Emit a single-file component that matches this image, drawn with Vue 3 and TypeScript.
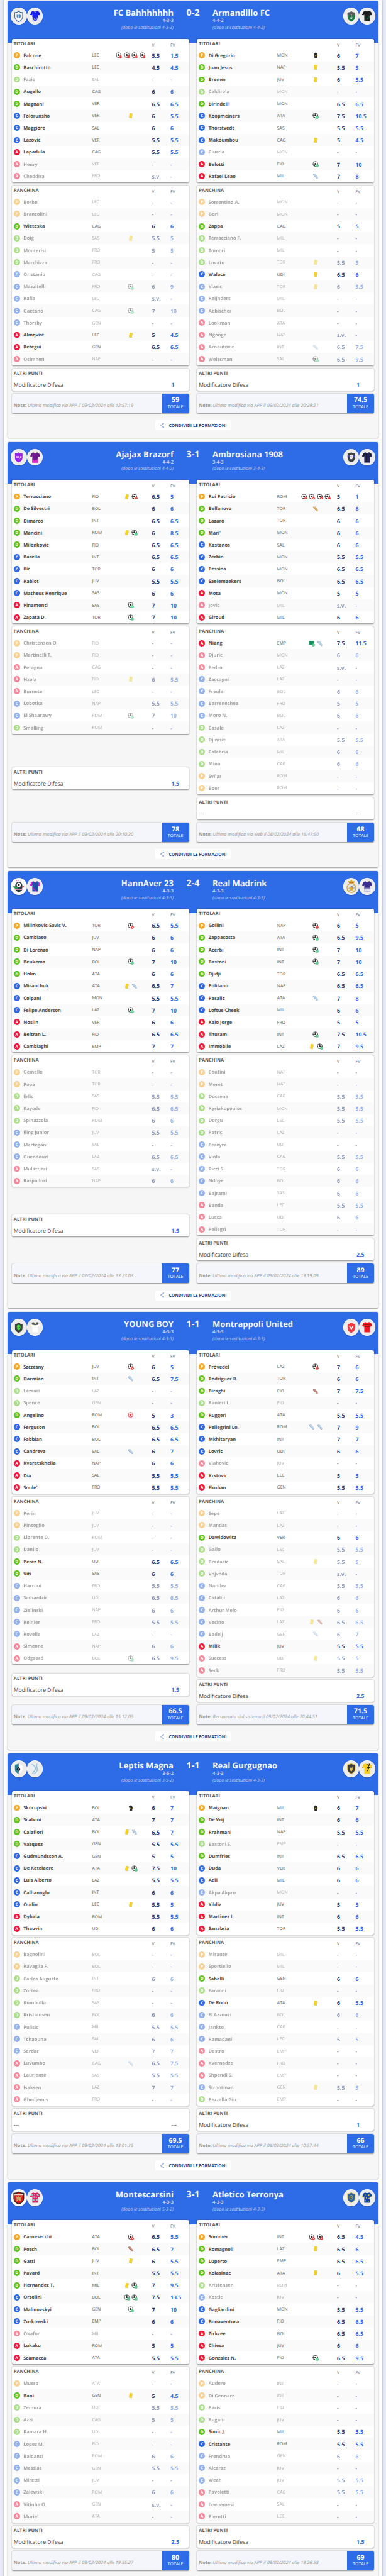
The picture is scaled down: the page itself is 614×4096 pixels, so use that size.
<script setup lang="ts">
type Shape = { d: string; f?: string; s?: string; w?: number }
type Art = { base: string; line?: string; lw?: number; bg?: string; round?: boolean; label?: string; shapes: Shape[] }
type Player = { out: boolean; role: string; name: string; club: string; icons: string[]; v: string; fv: string }
type Side = {
  team: string; form: string; after: string; crest: Art; shirt: Art
  starters: Player[]; bench: Player[]; mod: string; note: string; total: string
}
type Match = { score: string; sides: Side[] }

// Each line: [~]role|name|club|events|vote|fantavote, "~" marks a player not counted.
function parse(src: string): Player[] {
  return src.trim().split('\n').map((raw) => {
    const line = raw.trim()
    const out = line.startsWith('~')
    const [role, name, club, ev, v, fv] = (out ? line.slice(1) : line).split('|')
    return { out, role, name, club, icons: ev.split(''), v: v || '-', fv: fv || '-' }
  })
}

const SHIELD = 'M12 1.5C9.5 3.2 6 4 2.5 4V13C2.5 18.5 7 21.5 12 23.5C17 21.5 21.5 18.5 21.5 13V4C18 4 14.500 3.200 12 1.500Z'
const SHIRT = 'M8 1.200L10 2.500H14L16 1.200L20.500 3.400L23 10L19.400 11.400L18.300 9.500V22.800H5.700V9.500L4.600 11.400L1 10L3.500 3.400Z'

const matches: Match[] = [
  {
    score: '0-2',
    sides: [
      {
        team: 'FC Bahhhhhhh', form: '4-3-3', after: '4-3-3', mod: '1', note: 'Ultima modifica via APP il 09/02/2024 alle 12:57:19', total: '59',
        crest: { base: '#f4f6fa', line: '#2a5c9c', lw: 1.4, shapes: [{ d: 'M7 9L11 8L11.500 15L9 15.500L7 13ZM17 9L13 8L12.500 15L15 15.500L17 13Z', f: '#5b8fc4' }, { d: 'M8 11H16', s: '#244f86', w: 1 }] },
        shirt: { base: '#1a22f5', shapes: [{ d: 'M6 14L8 15L7 17L9 18L8 20L10 22L7 23H5ZM10 16L12 15L11 18L13 19L12 22L10 20ZM14 14L16 16L15 18L18 17V23H14L16 20Z', f: '#eef1ff' }, { d: 'M9.500 2L12 5L14.500 2', s: '#fff', w: 0.8 }] },
        starters: parse(`P|Falcone|LEC|xxxx|5.5|1.5
          D|Baschirotto|LEC||4.5|4.5
          ~D|Fazio|SAL|||
          D|Augello|CAG||6|6
          D|Magnani|VER||6.5|6.5
          C|Folorunsho|VER|y|6|5.5
          C|Maggiore|SAL||6|6
          C|Lazovic|VER||5.5|5.5
          A|Lapadula|CAG||5.5|5.5
          ~A|Henry|VER|||
          ~A|Cheddira|FRO||s.v.|`),
        bench: parse(`~P|Borbei|LEC|||
          ~P|Brancolini|LEC|||
          D|Wieteska|CAG||6|6
          ~D|Doig|SAS|y|5.5|5
          ~D|Monterisi|FRO||5|5
          ~D|Marchizza|FRO|||
          ~C|Oristanio|CAG|||
          ~C|Mazzitelli|FRO|g|6|9
          ~C|Rafia|LEC||s.v.|
          ~C|Gaetano|CAG|g|7|10
          ~C|Thorsby|GEN|||
          A|Almqvist|LEC|y|5|4.5
          A|Retegui|GEN||6.5|6.5
          ~A|Osimhen|NAP|||`),
      },
      {
        team: 'Armandillo FC', form: '4-4-2', after: '4-4-2', mod: '1', note: 'Ultima modifica via APP il 09/02/2024 alle 20:29:21', total: '74.5',
        crest: { base: '#1d7a45', shapes: [{ d: 'M0 0H24V10H0Z', f: '#5a5d5b' }, { d: 'M12 7V14M8.500 15H15.500M10 17H14', s: '#fff', w: 1.6 }] },
        shirt: { base: '#1d1f22', shapes: [{ d: 'M6 13L8 14L7 17L9 19ZM12 15L14 17L12 20L11 17ZM16 11L18 14L16 18L15 14ZM8 20L10 22H7ZM2 8L4 9L3 10Z', f: '#17633a' }] },
        starters: parse(`P|Di Gregorio|MON|k|6|7
          D|Juan Jesus|NAP|y|5.5|5
          D|Bremer|JUV|y|6|5.5
          ~D|Caldirola|MON|||
          D|Birindelli|MON||6.5|6.5
          C|Koopmeiners|ATA|g|7.5|10.5
          C|Thorstvedt|SAS||5.5|5.5
          C|Makoumbou|CAG|y|5|4.5
          ~C|Ciurria|MON|||
          A|Belotti|FIO|g|7|10
          A|Rafael Leao|MIL|a|7|8`),
        bench: parse(`~P|Sorrentino A.|MON|||
          ~P|Gori|MON|||
          D|Zappa|CAG||5|5
          ~D|Terracciano F.|MIL|||
          ~D|Tomori|MIL|||
          ~D|Lovato|TOR|y|5.5|5
          C|Walace|UDI|y|6.5|6
          ~C|Vlasic|TOR|y|6|5.5
          ~C|Reijnders|MIL|||
          ~C|Aebischer|BOL|||
          ~A|Lookman|ATA|||
          ~A|Ngonge|NAP||s.v.|
          ~A|Arnautovic|INT|a|6.5|7.5
          ~A|Weissman|SAL|g|6.5|9.5`),
      },
    ],
  },
  {
    score: '3-1',
    sides: [
      {
        team: 'Ajajax Brazorf', form: '4-4-2', after: '4-4-2', mod: '1.5', note: 'Ultima modifica via APP il 09/02/2024 alle 20:10:30', total: '78',
        crest: { base: '#9b22e8', label: '65,8', shapes: [] },
        shirt: { base: '#6c1c8c', shapes: [{ d: 'M5 13L8 15L7 18L9 17L11 20L13 16L14 19L18 14V24H5Z', f: '#e32bd0' }, { d: 'M8 1.500L12 4L16 1.500M1 10L4.600 11.400M23 10L19.400 11.400', s: '#e5a52c', w: 1.2 }] },
        starters: parse(`P|Terracciano|FIO|yx|6.5|5
          D|De Silvestri|BOL||6|6
          D|Dimarco|INT||6.5|6.5
          D|Mancini|ROM|yg|6|8.5
          D|Milenkovic|FIO||6.5|6.5
          C|Barella|INT||6.5|6.5
          C|Ilic|TOR||6|6
          C|Rabiot|JUV||5.5|5.5
          C|Matheus Henrique|SAS||6|6
          A|Pinamonti|SAS|g|7|10
          A|Zapata D.|TOR|g|7|10`),
        bench: parse(`~P|Christensen O.|FIO|||
          ~P|Martinelli T.|FIO|||
          ~A|Petagna|CAG|||
          ~A|Nzola|FIO|y|6|5.5
          ~A|Burnete|LEC|||
          ~C|Lobotka|NAP||5.5|5.5
          ~C|El Shaarawy|ROM|g|7|10
          ~D|Smalling|ROM|||`),
      },
      {
        team: 'Ambrosiana 1908', form: '3-4-3', after: '3-4-3', mod: '', note: 'Ultima modifica via web il 08/02/2024 alle 15:47:50', total: '68',
        crest: { base: '#3c3f45', shapes: [{ d: 'M0 8H24V12H0Z', f: '#4c46a8' }, { d: 'M12 6.500C8.500 6.500 7.500 9 8 12L9.500 14V16.500H14.500V14L16 12C16.500 9 15.500 6.500 12 6.500Z', f: '#f3f3f3' }, { d: 'M9.500 10.500H11.200V12H9.500ZM12.800 10.500H14.500V12H12.800Z', f: '#222' }] },
        shirt: { base: '#1b1b24', shapes: [{ d: 'M8 2V23M12 3V23M16 2V23', s: '#2d2b86', w: 1.7 }, { d: 'M3 4L1.500 10L4.500 11ZM21 4L22.500 10L19.500 11Z', f: '#2d2b86' }] },
        starters: parse(`P|Rui Patricio|ROM|xxxx|5|1
          D|Bellanova|TOR|b|6.5|8
          D|Lazaro|TOR||6|6
          D|Mari'|MON||6|6
          C|Kastanos|SAL||6|6
          C|Zerbin|MON||5.5|5.5
          C|Pessina|MON||6.5|6.5
          C|Saelemaekers|BOL||6.5|6.5
          A|Mota|MON||5|5
          ~A|Jovic|MIL||s.v.|
          A|Giroud|MIL||6|6`),
        bench: parse(`A|Niang|EMP|ra|7.5|11.5
          ~A|Djuric|MON||6|6
          ~A|Pedro|LAZ||s.v.|
          ~C|Zaccagni|LAZ|||
          ~C|Freuler|BOL||6|6
          ~C|Barrenechea|FRO||5|5
          ~C|Moro N.|BOL||6|6
          ~D|Casale|LAZ|||
          ~D|Djimsiti|ATA||5.5|5.5
          ~D|Calabria|MIL||6|6
          ~D|Mina|CAG||6|6
          ~P|Svilar|ROM|||
          ~P|Boer|ROM|||`),
      },
    ],
  },
  {
    score: '2-4',
    sides: [
      {
        team: 'HannAver 23', form: '4-3-3', after: '4-3-3', mod: '1.5', note: 'Ultima modifica via APP il 07/02/2024 alle 23:23:03', total: '77',
        crest: { base: '#fff', bg: '#fff', round: true, shapes: [{ d: 'M8 0.500L9 2.500H7ZM12 -0.500L13 2H11ZM16 0.500L17 2.500H15Z', f: '#ef5da8' }, { d: 'M5 11A7 7.500 0 1 1 19 11L18 19L12 23L6 19Z', f: '#2c3a44' }, { d: 'M8 9A4 4 0 1 1 16 9A4 4 0 1 1 8 9Z', f: '#fff' }, { d: 'M12 7L14 8.500L13.200 11H10.800L10 8.500Z', f: '#222' }, { d: 'M1 12C4 10 8 13 11 14L10 16.500C6 16 3 16 1 12Z', f: '#2f8d46' }, { d: 'M23 10L18 13L20 15Z', f: '#d63b3b' }, { d: 'M4 17H20', s: '#e99ac0', w: 2 }] },
        shirt: { base: '#1d4fa8', shapes: [{ d: 'M0 0H6L4.500 12H0ZM24 0H18L19.500 12H24Z', f: '#ee1fe0' }, { d: 'M5 16L19 24H5ZM5 12C8 17 12 20 16 23', s: '#ee1fe0', w: 1.1 }, { d: 'M9 1L12 5L15 1', s: '#e24', w: 1 }] },
        starters: parse(`P|Milinkovic-Savic V.|TOR|x|6.5|5.5
          D|Cambiaso|JUV||6|6
          D|Di Lorenzo|NAP||6|6
          D|Beukema|BOL|g|7|10
          D|Holm|ATA||6|6
          C|Miranchuk|ATA|ya|6.5|7
          C|Colpani|MON||5.5|5.5
          C|Felipe Anderson|LAZ|g|7|10
          A|Noslin|VER||6|6
          A|Beltran L.|FIO||6.5|6.5
          A|Cambiaghi|EMP||7|7`),
        bench: parse(`~P|Gemello|TOR|||
          ~P|Popa|TOR|||
          ~D|Erlic|SAS||5.5|5.5
          ~D|Kayode|FIO||6.5|6.5
          ~D|Spinazzola|ROM||6|6
          ~C|Iling Junior|JUV||5.5|5.5
          ~C|Martegani|SAL|||
          ~C|Guendouzi|LAZ||6.5|6.5
          ~A|Mulattieri|SAS||s.v.|
          ~A|Raspadori|NAP||6|6`),
      },
      {
        team: 'Real Madrink', form: '4-3-3', after: '4-3-3', mod: '2.5', note: 'Ultima modifica via APP il 09/02/2024 alle 19:19:09', total: '89',
        crest: { base: '#eee', round: true, shapes: [{ d: 'M6 2L9 3L12 0L15 3L18 2L17 6H7Z', f: '#d8a927' }, { d: 'M8 4.500H16V5.500H8Z', f: '#c8322f' }, { d: 'M3.500 14.500A8.500 8.500 0 1 1 20.500 14.500A8.500 8.500 0 1 1 3.500 14.500Z', f: '#e4e3dd', s: '#d1a93a', w: 1.6 }, { d: 'M5 17L18 9M7 20L20 13', s: '#a9b2c9', w: 1.5 }, { d: 'M8 16C10 11 14 11 16 16L14 19H10Z', f: '#e2ad2b' }, { d: 'M10.500 13H14', s: '#335', w: 1.5 }] },
        shirt: { base: '#3b2f92', shapes: [{ d: 'M5 15H19V18H5Z', f: '#8d87be' }, { d: 'M5 18H19V24H5Z', f: '#dcdbe8' }, { d: 'M9 1L12 4L15 1M1 10L4.600 11.400M23 10L19.400 11.400', s: '#e8c33a', w: 1 }] },
        starters: parse(`P|Gollini|NAP|x|6|5
          D|Zappacosta|ATA|g|6.5|9.5
          D|Acerbi|INT|g|7|10
          D|Bastoni|INT|g|7|10
          D|Djidji|TOR||6.5|6.5
          C|Politano|NAP||6.5|6.5
          C|Pasalic|ATA|a|7|8
          C|Loftus-Cheek|MIL||6|6
          A|Kaio Jorge|FRO||5|5
          A|Thuram|INT|g|7.5|10.5
          A|Immobile|LAZ|yg|7|9.5`),
        bench: parse(`~P|Contini|NAP|||
          ~P|Meret|NAP|||
          ~D|Dossena|CAG||5.5|5.5
          ~D|Kyriakopoulos|MON||5.5|5.5
          ~D|Dorgu|LEC||5.5|5.5
          ~D|Patric|LAZ|||
          ~C|Pereyra|UDI|||
          ~C|Viola|CAG||5.5|5.5
          ~C|Ricci S.|TOR||6|6
          ~C|Ndoye|BOL||6|6
          ~C|Bajrami|SAS||6|6
          ~A|Banda|LEC||5.5|5.5
          ~A|Lucca|UDI||6|6
          ~A|Pellegri|TOR|||`),
      },
    ],
  },
  {
    score: '1-1',
    sides: [
      {
        team: 'YOUNG BOY', form: '4-3-3', after: '4-3-3', mod: '1.5', note: 'Ultima modifica via APP il 09/02/2024 alle 15:12:05', total: '66.5',
        crest: { base: '#3b3f3e', shapes: [{ d: 'M12 6C8 6 7 9 7.500 12C8 15 10.500 17.500 12 18C13.500 17.500 16 15 16.500 12C17 9 16 6 12 6Z', f: '#45e03c' }, { d: 'M8.800 11L11.200 13.500M15.200 11L12.800 13.500', s: '#163', w: 1.5 }] },
        shirt: { base: '#fdfdfd', shapes: [{ d: 'M4 3L8 1L12 6L16 1L20 3L18 7L12 8L6 7Z', f: '#53585d' }, { d: 'M9.500 1L12 5L14.500 1', s: '#f1cb3e', w: 1 }, { d: 'M1 9L5 10.500M23 9L19 10.500', s: '#e9b93a', w: 1.2 }] },
        starters: parse(`P|Szczesny|JUV|x|6|5
          D|Darmian|INT|a|6.5|7.5
          ~D|Lazzari|LAZ|||
          ~D|Spence|GEN|||
          D|Angelino|ROM|o|5|3
          C|Ferguson|BOL||6.5|6.5
          C|Fabbian|BOL||6.5|6.5
          C|Candreva|SAL|a|6|7
          A|Kvaratskhelia|NAP||6|6
          A|Dia|SAL||5.5|5.5
          A|Soule'|FRO||5.5|5.5`),
        bench: parse(`~P|Perin|JUV|||
          ~P|Pinsoglio|JUV|||
          ~D|Llorente D.|ROM|||
          ~D|Danilo|JUV|||
          D|Perez N.|UDI||6.5|6.5
          D|Viti|SAS||6|6
          ~C|Harroui|FRO||5.5|5.5
          ~C|Samardzic|UDI||6.5|6.5
          ~C|Zielinski|NAP||6|6
          ~C|Reinier|FRO||5.5|5.5
          ~C|Rovella|LAZ|||
          ~A|Simeone|NAP||6|6
          ~A|Odgaard|BOL|g|6.5|9.5`),
      },
      {
        team: 'Montrappoli United', form: '4-3-3', after: '4-3-3', mod: '2.5', note: 'Recuperata dal sistema il 09/02/2024 alle 20:44:51', total: '71.5',
        crest: { base: '#ee3b41', shapes: [{ d: 'M6.500 9.500L9.500 9.500L12 13L14.500 9.500H17.500L12 17Z', f: '#fff' }] },
        shirt: { base: '#ee1620', shapes: [{ d: 'M3 7H21M4 11H20M9 2H15', s: '#7c1216', w: 0.9 }] },
        starters: parse(`P|Provedel|LAZ|x|7|6
          D|Rodriguez R.|TOR||6|6
          D|Biraghi|FIO|c|7|7.5
          ~D|Ranieri L.|FIO|||
          D|Ruggeri|ATA||5.5|5.5
          C|Pellegrini Lo.|ROM|aa|7|9
          C|Mkhitaryan|INT||7|7
          C|Lovric|UDI||6|6
          ~A|Vlahovic|JUV|||
          A|Krstovic|LEC||5|5
          A|Ekuban|GEN||5.5|5.5`),
        bench: parse(`~P|Sepe|LAZ|||
          ~P|Mandas|LAZ|||
          D|Dawidowicz|VER||6|6
          ~D|Gallo|LEC||5.5|5.5
          ~D|Bradaric|SAL|y|5.5|5
          ~D|Vojvoda|TOR||s.v.|
          ~C|Nandez|CAG||5.5|5.5
          ~C|Cataldi|LAZ||6|6
          ~C|Arthur Melo|FIO||6|6
          ~C|Vecino|LAZ|yc|6.5|6.5
          ~C|Badelj|GEN|a|6|7
          A|Milik|JUV||5.5|5.5
          ~A|Success|UDI|y|5.5|5
          ~A|Seck|FRO||5.5|5.5`),
      },
    ],
  },
  {
    score: '1-1',
    sides: [
      {
        team: 'Leptis Magna', form: '3-5-2', after: '3-5-2', mod: '', note: 'Ultima modifica via APP il 09/02/2024 alle 13:01:35', total: '69.5',
        crest: { base: '#fdfdfd', shapes: [{ d: 'M0 0H12V24H0Z', f: '#2f8296' }, { d: 'M12 8A2 2 0 1 1 11.900 8ZM9 12A2 2 0 1 1 8.900 12ZM14 12A2 2 0 1 1 13.900 12ZM12 15L15 17L11 18Z', f: '#14181c' }] },
        shirt: { base: '#e9f1f8', shapes: [{ d: 'M3 3C10 4 14 9 12 14S6 19 5 24M16 2C12 8 20 12 15 18L8 24', s: '#9fc3d6', w: 2.2 }] },
        starters: parse(`P|Skorupski|BOL|k|6|7
          D|Scalvini|ATA||7|7
          D|Calafiori|BOL|ya|6.5|7
          D|Vasquez|GEN||5.5|5.5
          C|Gudmundsson A.|GEN||5|5
          C|De Ketelaere|ATA|yg|7.5|10
          C|Luis Alberto|LAZ||5.5|5.5
          C|Calhanoglu|INT||6|6
          C|Oudin|LEC|y|5.5|5
          A|Dybala|ROM||5.5|5.5
          A|Thauvin|UDI||6|6`),
        bench: parse(`~P|Bagnolini|BOL|||
          ~P|Ravaglia F.|BOL|||
          ~D|Carlos Augusto|INT||6|6
          ~D|Zortea|FRO|||
          ~D|Kumbulla|SAS|||
          ~D|Kristiansen|BOL||6|6
          ~C|Pulisic|MIL||5.5|5.5
          ~C|Tchaouna|SAL||6|6
          ~C|Serdar|VER||7|7
          ~A|Luvumbo|CAG|a|6.5|7.5
          ~A|Lauriente'|SAS||5.5|5.5
          ~A|Isaksen|LAZ||7|7
          ~A|Ghedjemis|FRO|||`),
      },
      {
        team: 'Real Gurgugnao', form: '4-3-3', after: '4-3-3', mod: '1', note: 'Ultima modifica via APP il 06/02/2024 alle 10:57:44', total: '66',
        crest: { base: '#3a3d3c', line: '#e8bb3a', lw: 1.4, shapes: [{ d: 'M9 8L10.500 12H13L14.500 7L15.500 14L13 18H11L9 15Z', f: '#ecc14a' }] },
        shirt: { base: '#f7cf1e', shapes: [{ d: 'M17 1L11 12H14L10 21L18 9H14.500L19 2Z', f: '#26241c' }, { d: 'M9 1L12 3.500L15 1M1 10L4.600 11.400M23 10L19.400 11.400', s: '#26241c', w: 1 }] },
        starters: parse(`P|Maignan|MIL|k|6|7
          D|De Vrij|INT||6|6
          D|Rrahmani|NAP||5.5|5.5
          ~D|Bastoni S.|EMP|||
          D|Dumfries|INT||6.5|6.5
          C|Duda|VER||6|6
          C|Adli|MIL||6|6
          ~C|Akpa Akpro|MON|||
          A|Yildiz|JUV||5|5
          A|Martinez L.|INT||6|6
          A|Sanabria|TOR||5.5|5.5`),
        bench: parse(`~P|Mirante|MIL|||
          ~P|Sportiello|MIL|||
          D|Sabelli|GEN||6|6
          ~D|Faraoni|FIO|||
          C|De Roon|ATA|y|6|5.5
          ~C|El Azzouzi|BOL||6|6
          ~C|Jankto|CAG|||
          ~C|Ramadani|LEC||5|5
          ~A|Destro|EMP|||
          ~A|Kvernadze|FRO|||
          ~A|Shpendi S.|EMP|||
          ~C|Strootman|GEN|y|5.5|5
          ~D|Pezzella Giu.|EMP|||`),
      },
    ],
  },
  {
    score: '3-1',
    sides: [
      {
        team: 'Montescarsini', form: '4-3-3', after: '5-3-2', mod: '2.5', note: 'Ultima modifica via APP il 08/02/2024 alle 19:55:27', total: '80',
        crest: { base: '#de1c1c', line: '#2b2320', lw: 1.6, bg: '#fff', shapes: [{ d: 'M3 4.500H21V7H3Z', f: '#e9e2c6' }, { d: 'M12 7.500L13.500 11L18 9L16 14L17 19L12 16L7 19L8 14L6 9L10.500 11Z', f: '#c9a45e' }] },
        shirt: { base: '#dd1f67', shapes: [{ d: 'M2 5L6 4L8 7L4 8ZM8 10L12 9L13 12L9 13ZM14 4L18 5L20 8L16 7ZM6 16L9 15L11 18L7 19ZM13 15L18 14L17 18L14 19ZM9 21L13 20L12 23Z', f: '#8fc9c4' }, { d: 'M9 4L12 5L11 8ZM14 10L17 11L15 13ZM10 14L13 15L11 17Z', f: '#f4e7ee' }] },
        starters: parse(`P|Carnesecchi|ATA|x|6.5|5.5
          D|Posch|BOL|c|6.5|7
          D|Gatti|JUV|y|6|5.5
          D|Pavard|INT||5.5|5.5
          D|Hernandez T.|MIL|yg|7|9.5
          C|Orsolini|BOL|gg|7.5|13.5
          C|Malinovskyi|GEN|g|7|10
          C|Zurkowski|EMP||6|6
          ~A|Okafor|MIL|||
          A|Lukaku|ROM||5|5
          A|Scamacca|ATA||5.5|5.5`),
        bench: parse(`~P|Musso|ATA|||
          D|Bani|GEN|y|5|4.5
          ~D|Zemura|UDI||5.5|5.5
          ~D|Azzi|CAG||5|5
          ~D|Kamara H.|UDI|||
          ~C|Lopez M.|FIO|||
          ~C|Baldanzi|ROM||6|6
          ~C|Messias|GEN||5.5|5.5
          ~C|Miretti|JUV|||
          ~C|Zalewski|ROM||6|6
          ~A|Vitinha O.|GEN||s.v.|
          ~A|Muriel|ATA|||`),
      },
      {
        team: 'Atletico Terronya', form: '4-3-3', after: '4-3-3', mod: '1.5', note: 'Ultima modifica via APP il 09/02/2024 alle 19:26:58', total: '69',
        crest: { base: '#2c62a8', line: '#e9c94b', lw: 1.2, shapes: [{ d: 'M8 12A4 4.500 0 1 1 16 12A4 4.500 0 1 1 8 12Z', s: '#e3cb5e', w: 1.3 }, { d: 'M10.500 12A1.500 1.500 0 1 1 13.500 12A1.500 1.500 0 1 1 10.500 12Z', f: '#e3cb5e' }] },
        shirt: { base: '#12459c', shapes: [{ d: 'M7 5L9 6L8 9ZM14 6L17 5L16 9L14 8ZM9 12L11 11L11 15ZM15 13L18 12L16 16ZM7 18L9 17L10 20ZM13 19L15 18L16 21ZM11 7L12.500 8L11.500 10Z', f: '#f0cf2d' }, { d: 'M1 9.500L5 11M23 9.500L19 11', s: '#f0cf2d', w: 1.4 }] },
        starters: parse(`P|Sommer|INT|xx|6.5|4.5
          D|Romagnoli|LAZ|y|6.5|6
          D|Luperto|EMP||6.5|6.5
          D|Kolasinac|ATA|y|6|5.5
          ~D|Kristensen|ROM|||
          ~C|Kostic|JUV|||
          C|Gagliardini|MON||5.5|5.5
          C|Bonaventura|FIO||6.5|6.5
          A|Zirkzee|BOL||6.5|6.5
          A|Chiesa|JUV||6|6
          A|Gonzalez N.|FIO|g|6.5|9.5`),
        bench: parse(`~P|Audero|INT|||
          ~P|Di Gennaro|INT|||
          ~D|Parisi|FIO|||
          ~D|Rugani|JUV|||
          D|Simic J.|MIL||5.5|5.5
          C|Cristante|ROM||5.5|5.5
          ~C|Frendrup|GEN||6|6
          ~C|Alcaraz|JUV|||
          ~C|Weah|JUV||5.5|5.5
          ~A|Pavoletti|CAG||5.5|5.5
          ~A|Ikwuemesi|SAL|||
          ~A|Pierotti|LEC|||`),
      },
    ],
  },
]

const shoeColors: Record<string, [string, string]> = {
  a: ['#b9d3ee', '#7f9cbd'],
  b: ['#e3b568', '#a9772f'],
  c: ['#c98b7c', '#8e5548'],
}
const groups = (s: Side) => [
  { title: 'TITOLARI', players: s.starters },
  { title: 'PANCHINA', players: s.bench },
]
</script>

<template>
  <svg class="defs" width="0" height="0">
    <clipPath id="shield-clip"><path :d="SHIELD" /></clipPath>
    <clipPath id="shirt-clip"><path :d="SHIRT" /></clipPath>
  </svg>
  <div class="window">
    <main class="page">
      <article v-for="(m, mi) in matches" :key="mi" class="match">
        <header class="head">
          <div v-for="(s, si) in m.sides" :key="si" class="side" :class="{ away: si === 1 }">
            <div class="logos">
              <span class="disc" :class="{ plain: s.crest.bg }">
                <svg class="crest" :class="{ big: s.crest.bg || s.crest.round }" viewBox="0 0 24 24" preserveAspectRatio="none">
                  <g v-if="s.crest.round">
                    <path v-for="(p, i) in s.crest.shapes" :key="i" :d="p.d" :fill="p.f || 'none'" :stroke="p.s" :stroke-width="p.w" />
                  </g>
                  <g v-else clip-path="url(#shield-clip)">
                    <path :d="SHIELD" :fill="s.crest.base" />
                    <path v-for="(p, i) in s.crest.shapes" :key="i" :d="p.d" :fill="p.f || 'none'" :stroke="p.s" :stroke-width="p.w" />
                    <text v-if="s.crest.label" class="crest-label" x="12" y="15" text-anchor="middle">{{ s.crest.label }}</text>
                  </g>
                  <path v-if="s.crest.line" :d="SHIELD" fill="none" :stroke="s.crest.line" :stroke-width="s.crest.lw" />
                </svg>
              </span>
              <span class="disc">
                <svg class="shirt" viewBox="0 0 24 24" preserveAspectRatio="none">
                  <g clip-path="url(#shirt-clip)">
                    <path :d="SHIRT" :fill="s.shirt.base" />
                    <path v-for="(p, i) in s.shirt.shapes" :key="i" :d="p.d" :fill="p.f || 'none'" :stroke="p.s" :stroke-width="p.w" />
                  </g>
                </svg>
              </span>
            </div>
            <div class="names">
              <h2>{{ s.team }}</h2>
              <p class="form">{{ s.form }}</p>
              <p class="after">(dopo le sostituzioni {{ s.after }})</p>
            </div>
          </div>
          <div class="score">{{ m.score }}</div>
        </header>

        <div class="cols">
          <section v-for="(s, si) in m.sides" :key="si" class="col">
            <div v-for="g in groups(s)" :key="g.title" class="box">
              <div class="box-head">
                <h3>{{ g.title }}</h3>
                <span class="vlab">V</span>
                <span class="flab">FV</span>
              </div>
              <div v-for="p in g.players" :key="p.name" class="row">
                <div class="cells" :class="{ out: p.out }">
                  <span class="role" :class="'role-' + p.role">{{ p.role }}</span>
                  <span class="name">{{ p.name }}</span>
                  <span class="club">{{ p.club }}</span>
                  <span class="events">
                    <svg v-for="(ic, ii) in p.icons" :key="ii" class="ev" viewBox="0 0 16 16">
                      <g v-if="ic === 'x' || ic === 'g' || ic === 'o'">
                        <circle cx="7.500" cy="7.500" r="6.300" fill="#fff" :stroke="ic === 'o' ? '#e53935' : '#333'" stroke-width="1" />
                        <path d="M7.500 4.600L10.200 6.600L9.200 9.800H5.800L4.800 6.600ZM5.200 1.600H9.800L7.500 3.200ZM1.300 5.500L3.200 6.700L2.200 9.600L1.200 8.500ZM13.700 5.500L11.800 6.700L12.800 9.600L13.800 8.500ZM3.500 12.300L4.500 11L7 12.300L6.500 13.700ZM11.500 12.300L10.500 11L8 12.300L8.500 13.700Z" :fill="ic === 'o' ? '#e53935' : '#2b2b2b'" />
                        <g v-if="ic === 'x'">
                          <circle cx="12" cy="12" r="3.700" fill="#f0302f" />
                          <path d="M10.600 10.600L13.400 13.400M13.400 10.600L10.600 13.400" stroke="#fff" stroke-width="1.100" />
                        </g>
                        <g v-if="ic === 'g'">
                          <circle cx="12" cy="12" r="3.700" fill="#3fce85" />
                          <path d="M10.300 12L11.600 13.300L13.900 10.800" fill="none" stroke="#fff" stroke-width="1.100" />
                        </g>
                      </g>
                      <path v-else-if="ic === 'y'" d="M5.200 1.600L12.400 2.800L10.800 14.400L3.600 13.200Z" fill="#f5d327" />
                      <g v-else-if="ic === 'k'">
                        <path d="M4 6L3 3.500L4.500 3L5.300 5L5.300 1.800H7V1.200H8.700V1.800H10.400V3H11.800V8L12.500 6.500L13.500 7L11.700 11V14.800H5.200V11Z" fill="#2d2d2f" />
                        <circle cx="8.400" cy="8.600" r="1.500" fill="#f0c62c" />
                      </g>
                      <g v-else-if="ic === 'r'">
                        <path d="M1 2H14V11.500H1Z" fill="#1f9d6c" />
                        <path d="M3 4H12M3 6.500H12M3 9H12M5 3V11M8 3V11" stroke="#127a50" stroke-width="0.700" />
                        <circle cx="12" cy="12" r="3.600" fill="#3fce85" />
                        <path d="M10.300 12L11.600 13.300L13.900 10.800" fill="none" stroke="#fff" stroke-width="1.100" />
                      </g>
                      <g v-else-if="shoeColors[ic]">
                        <path d="M2.300 2.800L4 1.600L5.600 3.200L7.200 2.400L13.600 10.800C14.500 12.200 14 13.800 12.600 14.200C11.400 14.300 10.600 13.500 9.800 12.500L4.200 7.500C2.600 6 1.800 4.400 2.300 2.800Z" :fill="shoeColors[ic][0]" />
                        <path d="M2.300 3.500C2 5 3 6.500 4.200 7.500L9.800 12.500C10.600 13.500 11.400 14.300 12.600 14.200" fill="none" :stroke="shoeColors[ic][1]" stroke-width="0.900" />
                      </g>
                    </svg>
                  </span>
                  <span class="v">{{ p.v }}</span>
                  <span class="fv">{{ p.fv }}</span>
                </div>
              </div>
            </div>

            <div class="box altri">
              <h3>ALTRI PUNTI</h3>
              <div class="mod">
                <span class="mod-name">{{ s.mod ? 'Modificatore Difesa' : '---' }}</span>
                <span class="mod-val" :class="{ none: !s.mod }">{{ s.mod || '---' }}</span>
              </div>
            </div>

            <div class="box note">
              <p class="note-text"><b>Note:</b> <i>{{ s.note }}</i></p>
              <div class="total">
                <strong>{{ s.total }}</strong>
                <span>TOTALE</span>
              </div>
            </div>
          </section>
        </div>

        <button class="share" type="button">
          <svg viewBox="0 0 10 14" width="10" height="14">
            <path d="M7.500 2.200L2.200 7L7.500 11.800" fill="none" stroke="#4a68ad" stroke-width="1" />
            <circle cx="7.800" cy="2.200" r="1.500" fill="#dfe6f5" stroke="#4a68ad" stroke-width="0.800" />
            <circle cx="2.200" cy="7" r="1.500" fill="#dfe6f5" stroke="#4a68ad" stroke-width="0.800" />
            <circle cx="7.800" cy="11.800" r="1.500" fill="#dfe6f5" stroke="#4a68ad" stroke-width="0.800" />
          </svg>
          <span>CONDIVIDI LE FORMAZIONI</span>
        </button>
      </article>
    </main>
  </div>
</template>

<style>
html,
body {
  background: #e8ebf5;
}
</style>

<style scoped>
.defs {
  position: absolute;
}
.window {
  height: 4096px;
  overflow: hidden;
  background: #e8ebf5;
  font-family: "Open Sans", "Noto Sans", sans-serif;
  text-rendering: geometricPrecision;
}
.page {
  zoom: 0.62;
  box-sizing: border-box;
  width: 970px;
  min-height: 6640px;
  margin: 0 auto;
  padding: 2px 10px 0;
  background: #fff;
  box-shadow: 0 0 6px rgba(60, 70, 110, 0.45);
}
h2,
h3,
p {
  margin: 0;
}
.match {
  margin-bottom: 10px;
  padding-bottom: 20px;
  border-radius: 5px;
  background: #f6f6f6;
  box-shadow: 0 1px 3px rgba(0, 0, 0, 0.4);
}
.head {
  display: grid;
  grid-template-columns: 1fr 100px 1fr;
  box-sizing: border-box;
  height: 107.5px;
  border-radius: 5px 5px 0 0;
  background: #2e6be6;
  color: #f3f5fb;
}
.side {
  grid-column: 1;
  grid-row: 1;
  display: flex;
  justify-content: space-between;
  padding-left: 8px;
}
.side.away {
  grid-column: 3;
  flex-direction: row-reverse;
  padding: 0 8px 0 0;
}
.logos {
  display: flex;
  padding-top: 18px;
}
.disc {
  display: flex;
  align-items: center;
  justify-content: center;
  box-sizing: border-box;
  width: 41px;
  height: 43px;
  border: 3px solid #f8f8f8;
  border-radius: 50%;
  background: #ececec;
  box-shadow: 0 1px 2px rgba(0, 0, 0, 0.3);
}
.disc.plain {
  background: #fff;
}
.crest {
  width: 25px;
  height: 29px;
}
.crest.big {
  width: 32px;
  height: 34px;
}
.crest-label {
  font-size: 7px;
  font-weight: 700;
  fill: #fff;
}
.shirt {
  width: 29px;
  height: 30px;
}
.names {
  text-align: right;
}
.away .names {
  text-align: left;
}
.names h2 {
  padding-top: 16px;
  font-size: 21px;
  line-height: 30px;
  font-weight: 700;
  white-space: nowrap;
}
.form {
  margin-top: -1px;
  font-size: 12px;
  line-height: 16px;
  font-weight: 700;
  color: #c5d0ea;
}
.after {
  font-size: 11.500px;
  line-height: 17px;
  font-style: italic;
  color: #c5d0ea;
}
.score {
  grid-column: 2;
  grid-row: 1;
  padding-top: 16px;
  font-size: 23px;
  line-height: 32px;
  font-weight: 700;
  text-align: center;
}
.cols {
  display: grid;
  grid-template-columns: 455px 455px;
  gap: 20px;
  margin: -10px 10px 0;
}
.col {
  display: flex;
  flex-direction: column;
}
.box {
  flex: none;
  margin-bottom: 8px;
  border-radius: 5px;
  background: #fff;
  box-shadow: 0 1px 3px rgba(0, 0, 0, 0.42);
  color: #555;
}
.box-head {
  display: grid;
  grid-template-columns: 354.500px 47.500px 1fr;
  height: 27px;
  padding-left: 5px;
}
h3 {
  font-size: 12px;
  line-height: 27px;
  font-weight: 700;
  color: #5a5a5a;
}
.vlab,
.flab {
  font-size: 11px;
  line-height: 33px;
  color: #666;
}
.row:nth-child(odd) {
  background: #fafafa;
}
.row:last-child {
  border-radius: 0 0 5px 5px;
}
.cells {
  display: grid;
  grid-template-columns: 25px 176px 51px 102.500px 47.500px 1fr;
  align-items: center;
  height: 31px;
  padding-left: 5px;
  white-space: nowrap;
}
.cells.out {
  opacity: 0.5;
}
.role {
  width: 16px;
  height: 16px;
  border-radius: 50%;
  font-size: 10px;
  line-height: 16px;
  font-weight: 700;
  text-align: center;
  color: #fff;
}
.role-P {
  background: #f8a727;
}
.role-D {
  background: #5fc51f;
}
.role-C {
  background: #2e6be6;
}
.role-A {
  background: #f3173c;
}
.name {
  padding-top: 2px;
  font-size: 12px;
  font-weight: 700;
  color: #4a4a4a;
}
.club {
  padding-bottom: 1px;
  font-size: 11px;
  color: #555;
}
.events {
  display: flex;
  justify-content: center;
  gap: 4px;
  margin-left: -6px;
}
.ev {
  width: 16px;
  height: 16px;
  filter: drop-shadow(0 1px 1px rgba(0, 0, 0, 0.3));
}
.v,
.fv {
  padding-top: 2px;
  font-size: 14px;
  font-weight: 700;
  color: #1b3a7d;
}
.fv {
  color: #2e6be6;
}
.altri {
  box-sizing: border-box;
  height: 57px;
  margin-top: auto;
  margin-bottom: auto;
  padding-left: 5px;
}
.altri + .note {
  margin-top: 8px;
}
.mod {
  display: grid;
  grid-template-columns: 404.500px 1fr;
  align-items: center;
  height: 30px;
  font-size: 14px;
}
.mod-name {
  font-weight: 400;
  color: #444;
}
.mod-val {
  font-weight: 700;
  color: #2e6be6;
}
.mod-val.none {
  font-weight: 400;
  color: #444;
}
.note {
  display: flex;
  justify-content: space-between;
  height: 50px;
  margin-bottom: 0;
  overflow: hidden;
  background: #f4f6fb;
}
.note-text {
  padding: 23px 0 0 5px;
  font-size: 12px;
  line-height: 17px;
  color: #999;
}
.note-text b {
  font-weight: 700;
}
.total {
  display: flex;
  flex-direction: column;
  align-items: center;
  width: 70px;
  padding-top: 9px;
  box-sizing: border-box;
  background: #2e6be6;
  color: #fff;
}
.total strong {
  font-size: 17px;
  line-height: 18px;
  font-weight: 700;
}
.total span {
  font-size: 11px;
  line-height: 14px;
}
.share {
  display: flex;
  align-items: center;
  width: 192px;
  height: 26px;
  margin: 18px auto 0;
  padding: 0 0 0 12px;
  border: 0;
  border-radius: 2px;
  background: #fff;
  font-family: inherit;
  font-size: 11px;
  font-weight: 700;
  color: #27468f;
  white-space: nowrap;
}
.share span {
  margin-left: 12px;
}
</style>
